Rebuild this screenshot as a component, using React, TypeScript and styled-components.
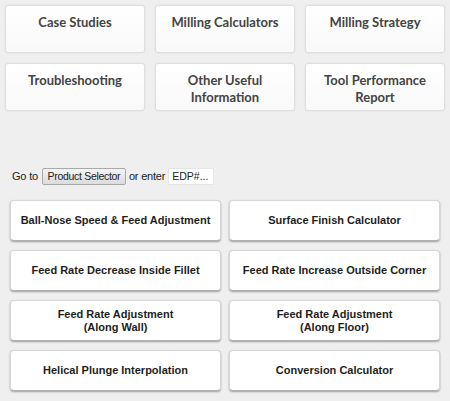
import styled, { createGlobalStyle } from "styled-components";

const GlobalStyle = createGlobalStyle`
  html, body {
    margin: 0;
    padding: 0;
    background: #efefef;
  }
  body {
    font-family: "Liberation Sans", Arial, sans-serif;
  }
`;

const topLinks = [
  ["Case Studies"],
  ["Milling Calculators"],
  ["Milling Strategy"],
  ["Troubleshooting"],
  ["Other Useful", "Information"],
  ["Tool Performance", "Report"],
];

const calculators = [
  ["Ball-Nose Speed & Feed Adjustment"],
  ["Surface Finish Calculator"],
  ["Feed Rate Decrease Inside Fillet"],
  ["Feed Rate Increase Outside Corner"],
  ["Feed Rate Adjustment", "(Along Wall)"],
  ["Feed Rate Adjustment", "(Along Floor)"],
  ["Helical Plunge Interpolation"],
  ["Conversion Calculator"],
];

const App = () => {
  return (
    <>
      <GlobalStyle />
      <Page>
        <TopGrid>
          {topLinks.map((lines) => (
            <TopCard key={lines.join(" ")}>
              {lines.map((l) => (
                <span key={l}>{l}</span>
              ))}
            </TopCard>
          ))}
        </TopGrid>
        <GoToRow>
          <span>Go to</span>
          <SelectorButton>Product Selector</SelectorButton>
          <span>or enter</span>
          <EdpInput placeholder="EDP#..." />
        </GoToRow>
        <CalcGrid>
          {calculators.map((lines) => (
            <CalcButton key={lines.join(" ")}>
              {lines.map((l) => (
                <span key={l}>{l}</span>
              ))}
            </CalcButton>
          ))}
        </CalcGrid>
      </Page>
    </>
  );
};

const Page = styled.div`
  width: 450px;
  height: 401px;
  overflow: hidden;
`;

const TopGrid = styled.div`
  display: grid;
  grid-template-columns: repeat(3, 140px);
  grid-auto-rows: 48px;
  gap: 10px;
  padding: 5px;
`;

const TopCard = styled.div`
  box-sizing: border-box;
  display: flex;
  flex-direction: column;
  align-items: center;
  padding-top: 8px;
  background: linear-gradient(#ffffff, #f9f9f9);
  border: 1px solid #dedede;
  border-radius: 3px;
  box-shadow: 0 0 2px rgba(0, 0, 0, 0.08);
  font-family: Lato, "Open Sans", sans-serif;
  font-weight: 700;
  font-size: 13px;
  line-height: 17px;
  color: #444;
  cursor: pointer;
`;

const GoToRow = styled.div`
  display: flex;
  align-items: center;
  gap: 3px;
  margin: 51px 0 0 12px;
  height: 18px;
  font-size: 11px;
  letter-spacing: -0.2px;
  color: #222;
`;

const SelectorButton = styled.button`
  box-sizing: border-box;
  height: 17px;
  width: 84px;
  padding: 0;
  margin: 0 0 0 1px;
  font-family: "Liberation Sans", Arial, sans-serif;
  font-size: 10.5px;
  letter-spacing: -0.3px;
  color: #222;
  background: linear-gradient(#f4f4f4, #dcdcdc);
  border: 1px solid #a8a8a8;
  border-radius: 2px;
`;

const EdpInput = styled.input`
  box-sizing: border-box;
  width: 46px;
  height: 17px;
  padding: 0 3px;
  margin-left: 0;
  font-family: "Liberation Sans", Arial, sans-serif;
  font-size: 10.5px;
  border: 1px solid #e6e6e6;
  background: #fff;
  &::placeholder {
    color: #222;
  }
`;

const CalcGrid = styled.div`
  display: grid;
  grid-template-columns: repeat(2, 211px);
  grid-auto-rows: 41px;
  column-gap: 8px;
  row-gap: 9px;
  margin: 15px 0 0 10px;
`;

const CalcButton = styled.div`
  box-sizing: border-box;
  display: flex;
  flex-direction: column;
  align-items: center;
  justify-content: center;
  background: #fff;
  border: 1px solid #d6d6d6;
  border-bottom-color: #b0b0b0;
  border-radius: 4px;
  box-shadow: 0 1px 2px rgba(0, 0, 0, 0.35);
  font-weight: 700;
  font-size: 11px;
  line-height: 13px;
  color: #1e1e1e;
  cursor: pointer;
`;

export default App;
